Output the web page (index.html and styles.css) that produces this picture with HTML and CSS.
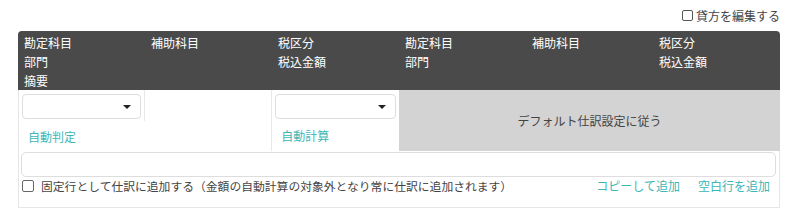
FILE: index.html
```html
<!DOCTYPE html>
<html lang="ja">
<head>
    <meta charset="UTF-8">
    <meta name="viewport" content="width=device-width, initial-scale=1.0">
    <title>仕訳行</title>
    <link rel="stylesheet" href="styles.css">
</head>
<body>

<div class="page">
    <div class="toolbar">
        <label class="check"><input type="checkbox"> 貸方を編集する</label>
    </div>

    <div class="panel">
        <div class="head">
            <div>勘定科目</div>
            <div>補助科目</div>
            <div>税区分</div>
            <div>勘定科目</div>
            <div>補助科目</div>
            <div>税区分</div>

            <div>部門</div>
            <div></div>
            <div>税込金額</div>
            <div>部門</div>
            <div></div>
            <div>税込金額</div>

            <div>摘要</div>
        </div>

        <div class="row">
            <div class="left">
                <div class="pair">
                    <div class="cell first"><div class="select"></div></div>
                    <div class="cell"></div>
                    <a class="link auto" href="#">自動判定</a>
                </div>
                <div class="tax">
                    <div class="select"></div>
                    <a class="link auto" href="#">自動計算</a>
                </div>
            </div>
            <div class="default">デフォルト仕訳設定に従う</div>
        </div>

        <div class="memo">
            <input type="text" class="memo-input">
        </div>

        <div class="foot">
            <label class="check"><input type="checkbox"> 固定行として仕訳に追加する（金額の自動計算の対象外となり常に仕訳に追加されます）</label>
            <div class="actions">
                <a class="link" href="#">コピーして追加</a>
                <a class="link" href="#">空白行を追加</a>
            </div>
        </div>
    </div>
</div>

</body>
</html>
```

FILE: styles.css
```css
body {
    margin: 0;
    font-family: "Noto Sans CJK JP", "Noto Sans", sans-serif;
    font-size: 12px;
    color: #333;
    background: #fff;
}
.page {
    padding: 0 20px 0 18px;
}
.toolbar {
    height: 31px;
    display: flex;
    justify-content: flex-end;
    align-items: center;
}
.check {
    display: flex;
    align-items: center;
    gap: 3px;
    color: #444;
}
.check input {
    appearance: none;
    margin: 0;
    width: 11px;
    height: 11px;
    border: 1px solid #555;
    border-radius: 2px;
    background: #fff;
}
.panel {
    border: 1px solid #e6e6e6;
    border-top: none;
    border-radius: 4px 4px 0 0;
}
.head {
    display: grid;
    grid-template-columns: repeat(6, 1fr);
    grid-auto-rows: 19px;
    padding-top: 2px;
    background: #4a4a4a;
    color: #fff;
    border-radius: 4px 4px 0 0;
    margin: 0 -1px;
}
.head div {
    padding-left: 6px;
    line-height: 19px;
}
.row {
    display: grid;
    grid-template-columns: 3fr 3fr;
    height: 59px;
}
.left {
    display: grid;
    grid-template-columns: 2fr 1fr;
}
.pair {
    display: grid;
    grid-template-columns: 1fr 1fr;
    grid-template-rows: 31px 1fr;
    border-right: 1px solid #e8e8e8;
}
.cell {
    padding: 4px 0 0 3px;
}
.cell.first {
    border-right: 1px solid #e8e8e8;
    padding-right: 3px;
}
.pair .auto {
    grid-column: 1 / 3;
    padding-top: 2px;
}
.select {
    position: relative;
    height: 23px;
    border: 1px solid #ddd;
    border-radius: 4px;
    background: #fff;
}
.select::after {
    content: "";
    position: absolute;
    right: 9px;
    top: 10px;
    border-left: 4px solid transparent;
    border-right: 4px solid transparent;
    border-top: 4px solid #222;
}
.tax {
    display: grid;
    grid-template-rows: 31px 1fr;
    padding: 4px 3px 0 3px;
}
.tax .select {
    margin-bottom: 4px;
}
.link {
    color: #3db6b6;
    text-decoration: none;
}
.auto {
    padding-left: 9px;
    line-height: 28px;
}
.tax .auto {
    padding-left: 6px;
    line-height: 22px;
}
.default {
    background: #d3d3d3;
    color: #444;
    display: flex;
    align-items: center;
    justify-content: center;
    margin-right: -1px;
}
.memo {
    padding: 3px 3px 0 2px;
}
.memo-input {
    display: block;
    box-sizing: border-box;
    width: 100%;
    height: 25px;
    border: 1px solid #ddd;
    border-radius: 5px;
}
.foot {
    display: flex;
    justify-content: space-between;
    align-items: center;
    line-height: 18px;
    padding: 0 9px 12px 3px;
}
.foot .check {
    gap: 7px;
    font-size: 11.8px;
}
.foot .check input {
    width: 12px;
    height: 12px;
    border-color: #666;
}
.actions {
    display: flex;
    gap: 18px;
}
```
